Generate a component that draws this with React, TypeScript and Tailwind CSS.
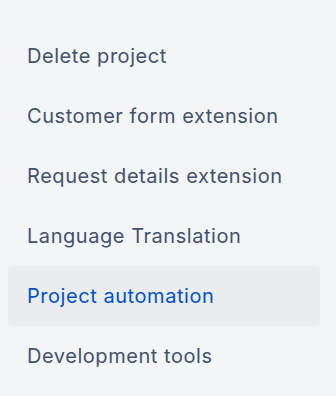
const items = [
  'Delete project',
  'Customer form extension',
  'Request details extension',
  'Language Translation',
  'Project automation',
  'Development tools',
]

export default function App() {
  const selected = 'Project automation'

  return (
    <div className="h-[396px] w-[336px] overflow-hidden bg-[#f4f5f7] font-['Inter',sans-serif]">
      <nav className="flex w-[320px] flex-col pl-2 pt-[26px]">
        {items.map((item) => (
          <a
            key={item}
            href="#"
            className={`flex h-[60px] items-center rounded-[4px] pl-[19px] text-[20px] tracking-[0.55px] ${
              item === selected ? 'bg-[#ebecf0] text-[#0052cc]' : 'text-[#42526e]'
            }`}
          >
            {item}
          </a>
        ))}
      </nav>
    </div>
  )
}
